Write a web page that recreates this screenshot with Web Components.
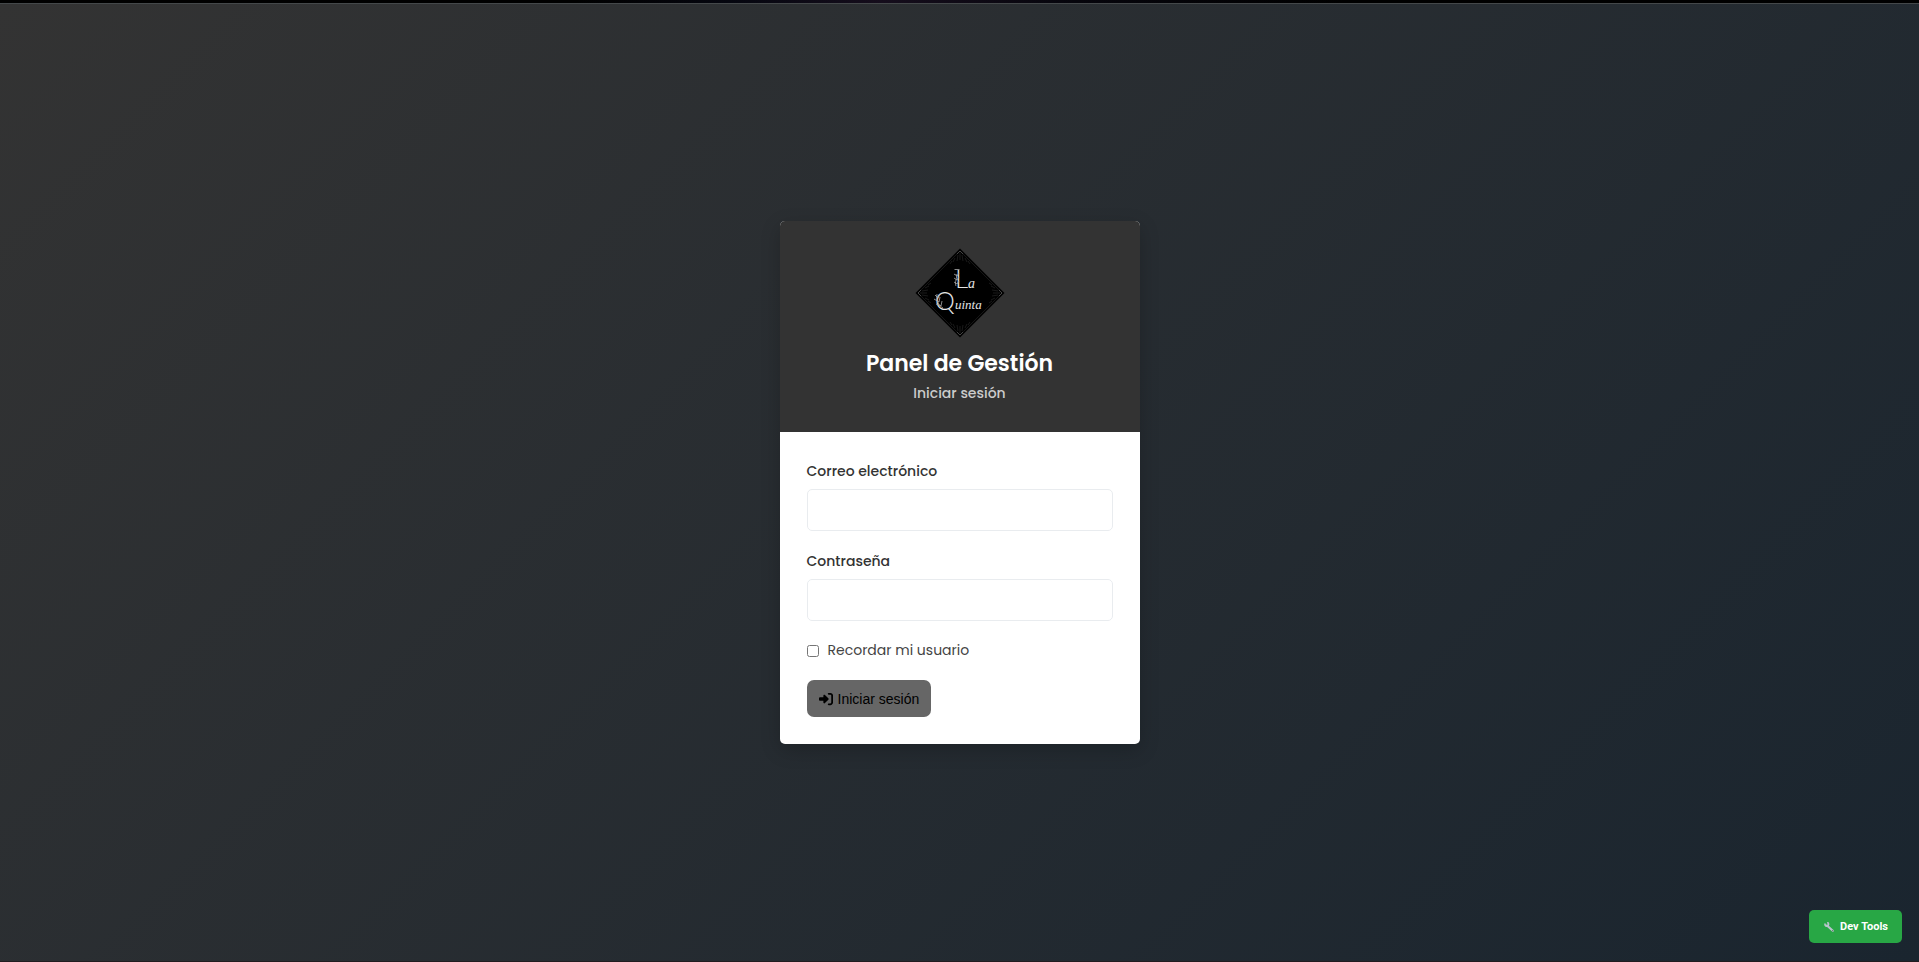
<!DOCTYPE html>
<html lang="es">
<head>
<meta charset="UTF-8">
<meta name="viewport" content="width=device-width, initial-scale=1">
<title>Panel de Gestión</title>
<style>
  body {
    margin: 0;
    font-family: Poppins, Inter, sans-serif;
    font-size: 14px;
    line-height: 24px;
    color: #333;
  }
</style>
</head>
<body>
<login-page>
  <login-card>
    <quinta-logo slot="logo"></quinta-logo>
    <span slot="title">Panel de Gestión</span>
    <span slot="subtitle">Iniciar sesión</span>
    <login-form></login-form>
  </login-card>
  <dev-tools slot="tools">Dev Tools</dev-tools>
</login-page>

<script>
// ── Base ──────────────────────────────────────────────────────────────────────
function define(name, html) {
  customElements.define(name, class extends HTMLElement {
    constructor() {
      super();
      this.attachShadow({ mode: "open" }).innerHTML = html;
    }
  });
}

// ── Página ────────────────────────────────────────────────────────────────────
define("login-page", `
  <style>
    :host {
      box-sizing: border-box;
      min-height: 100vh;
      display: flex;
      flex-direction: column;
      background: linear-gradient(135deg, #333333 0%, #1a252f 100%);
      border-bottom: 1px solid #211c20;
    }
    .strip {
      height: 3px;
      background: linear-gradient(90deg, #000 30%, #05060f 38%, #150d1c 46%, #06050c 56%, #000 70%);
      border-bottom: 1px solid #44484a;
    }
    main {
      flex: 1;
      display: flex;
      align-items: center;
      justify-content: center;
    }
  </style>
  <div class="strip"></div>
  <main><slot></slot></main>
  <slot name="tools"></slot>
`);

// ── Tarjeta ───────────────────────────────────────────────────────────────────
define("login-card", `
  <style>
    :host {
      display: block;
      width: 100%;
      max-width: 360px;
      background: #fff;
      border-radius: 5px;
      overflow: hidden;
      box-shadow: 0 6px 20px rgba(0, 0, 0, 0.2);
    }
    header {
      display: flex;
      flex-direction: column;
      align-items: center;
      padding: 27px;
      background: #333;
      color: #fff;
    }
    h1 {
      margin: 11px 0 2px;
      font-size: 22px;
      line-height: 30px;
      font-weight: 600;
    }
    p {
      margin: 0;
      font-weight: 500;
      color: #ccc;
    }
    section { padding: 27px; }
  </style>
  <header>
    <slot name="logo"></slot>
    <h1><slot name="title"></slot></h1>
    <p><slot name="subtitle"></slot></p>
  </header>
  <section><slot></slot></section>
`);

// ── Logo ──────────────────────────────────────────────────────────────────────
define("quinta-logo", `
  <style>
    :host { display: block; width: 90px; height: 90px; }
    svg { display: block; width: 100%; height: 100%; }
    text { font-family: "Liberation Serif", serif; font-style: italic; fill: #e4e4e4; }
    .initial { font-family: Lato, sans-serif; font-style: normal; font-weight: 300; }
  </style>
  <svg viewBox="0 0 90 90" role="img" aria-label="La Quinta">
    <path d="M45 .5 89.500 45 45 89.500 .5 45z" fill="#000"/>
    <path d="M45 3 87 45 45 87 3 45z" fill="none" stroke="#1c1c1c" stroke-width=".8"/>
    <g fill="none" stroke="#2c2c2c" stroke-width=".6">
      <path id="rays" d="M45 5v7M43 7l-1 6M47 7l1 6M40 10l-2 4M50 10l2 4M37 13l-2 3M53 13l2 3"/>
      <path id="tip" d="M42 6l3-3 3 3" stroke="#666"/>
      <use href="#rays" transform="rotate(90 45 45)"/>
      <use href="#rays" transform="rotate(180 45 45)"/>
      <use href="#rays" transform="rotate(270 45 45)"/>
      <use href="#tip" transform="rotate(90 45 45)"/>
      <use href="#tip" transform="rotate(180 45 45)"/>
      <use href="#tip" transform="rotate(270 45 45)"/>
    </g>
    <text class="initial" x="40" y="40" font-size="26">L</text>
    <text x="53" y="40" font-size="14">a</text>
    <text class="initial" x="20" y="62" font-size="25">Q</text>
    <text x="40" y="61" font-size="13">uinta</text>
    <g fill="none" stroke="#aaa" stroke-width=".8">
      <path d="M39.500 21.500h5M41 38c-2-4 2-8 0-12M39 26l3 2 2-3M39 30l3 2 2-3M39 34l3 2 2-3"/>
      <path d="M28 60c-5-3-7-8-6-14M20 47l3 3 2-4M19 51l5 3 1-5M21 56l5 2 1-5"/>
    </g>
  </svg>
`);

// ── Formulario ────────────────────────────────────────────────────────────────
define("login-form", `
  <style>
    :host { display: block; }
    form {
      display: flex;
      flex-direction: column;
      gap: 18px;
    }
    .field { display: flex; flex-direction: column; gap: 6px; }
    .field label { font-weight: 500; }
    .field input {
      box-sizing: border-box;
      width: 100%;
      height: 42px;
      padding: 8px 12px;
      border: 1px solid #e9ecef;
      border-radius: 5px;
      background: #fff;
      font: inherit;
      color: inherit;
    }
    .check { display: flex; align-items: center; gap: 9px; }
    .check input { width: 12px; height: 12px; margin: 0; }
    .check label { line-height: 23px; color: #444; }
    button {
      align-self: flex-start;
      display: flex;
      align-items: center;
      gap: 5px;
      height: 37px;
      padding: 0 12px;
      border: 0;
      border-radius: 7px;
      background: #666;
      color: #000;
      font: 14px "Liberation Sans", Arial, sans-serif;
    }
    button svg { width: 14px; height: 14px; }
  </style>
  <form>
    <div class="field">
      <label for="email">Correo electrónico</label>
      <input id="email" type="email">
    </div>
    <div class="field">
      <label for="password">Contraseña</label>
      <input id="password" type="password">
    </div>
    <div class="check">
      <input id="remember" type="checkbox">
      <label for="remember">Recordar mi usuario</label>
    </div>
    <button type="submit">
      <svg viewBox="0 0 512 512" fill="currentColor" aria-hidden="true"><path d="M217.9 105.9L340.7 228.7c7.2 7.2 11.3 17.1 11.3 27.3s-4.1 20.1-11.3 27.3L217.9 406.1c-6.4 6.4-15 9.9-24 9.9c-18.7 0-33.9-15.2-33.9-33.9l0-62.1L32 320c-17.7 0-32-14.3-32-32l0-64c0-17.7 14.3-32 32-32l128 0 0-62.1c0-18.7 15.2-33.9 33.9-33.9c9 0 17.6 3.6 24 9.9zM352 416l64 0c17.7 0 32-14.3 32-32l0-256c0-17.7-14.3-32-32-32l-64 0c-17.7 0-32-14.3-32-32s14.3-32 32-32l64 0c53 0 96 43 96 96l0 256c0 53-43 96-96 96l-64 0c-17.7 0-32-14.3-32-32s14.3-32 32-32z"/></svg>
      Iniciar sesión
    </button>
  </form>
`);

// ── Botón flotante ────────────────────────────────────────────────────────────
define("dev-tools", `
  <style>
    :host { position: fixed; right: 17px; bottom: 19px; }
    button {
      display: flex;
      align-items: center;
      gap: 5px;
      height: 33px;
      padding: 0 14px;
      border: 0;
      border-radius: 5px;
      background: #28a745;
      color: #fff;
      font: bold 11px Roboto, Arial, sans-serif;
    }
    svg { width: 12px; height: 12px; }
  </style>
  <button type="button">
    <svg viewBox="0 0 12 12" fill="none" aria-hidden="true">
      <path d="M4 4.500 9.800 9.800" stroke="#b8c4cc" stroke-width="2.200" stroke-linecap="round"/>
      <path d="M2 3.200c0 1.700 1.500 2.300 2.600 1.600s1.300-2.200.2-3" stroke="#b8c4cc" stroke-width="1.700" stroke-linecap="round"/>
      <circle cx="9.700" cy="9.700" r=".6" fill="#52705c"/>
    </svg>
    <slot></slot>
  </button>
`);
</script>
</body>
</html>
